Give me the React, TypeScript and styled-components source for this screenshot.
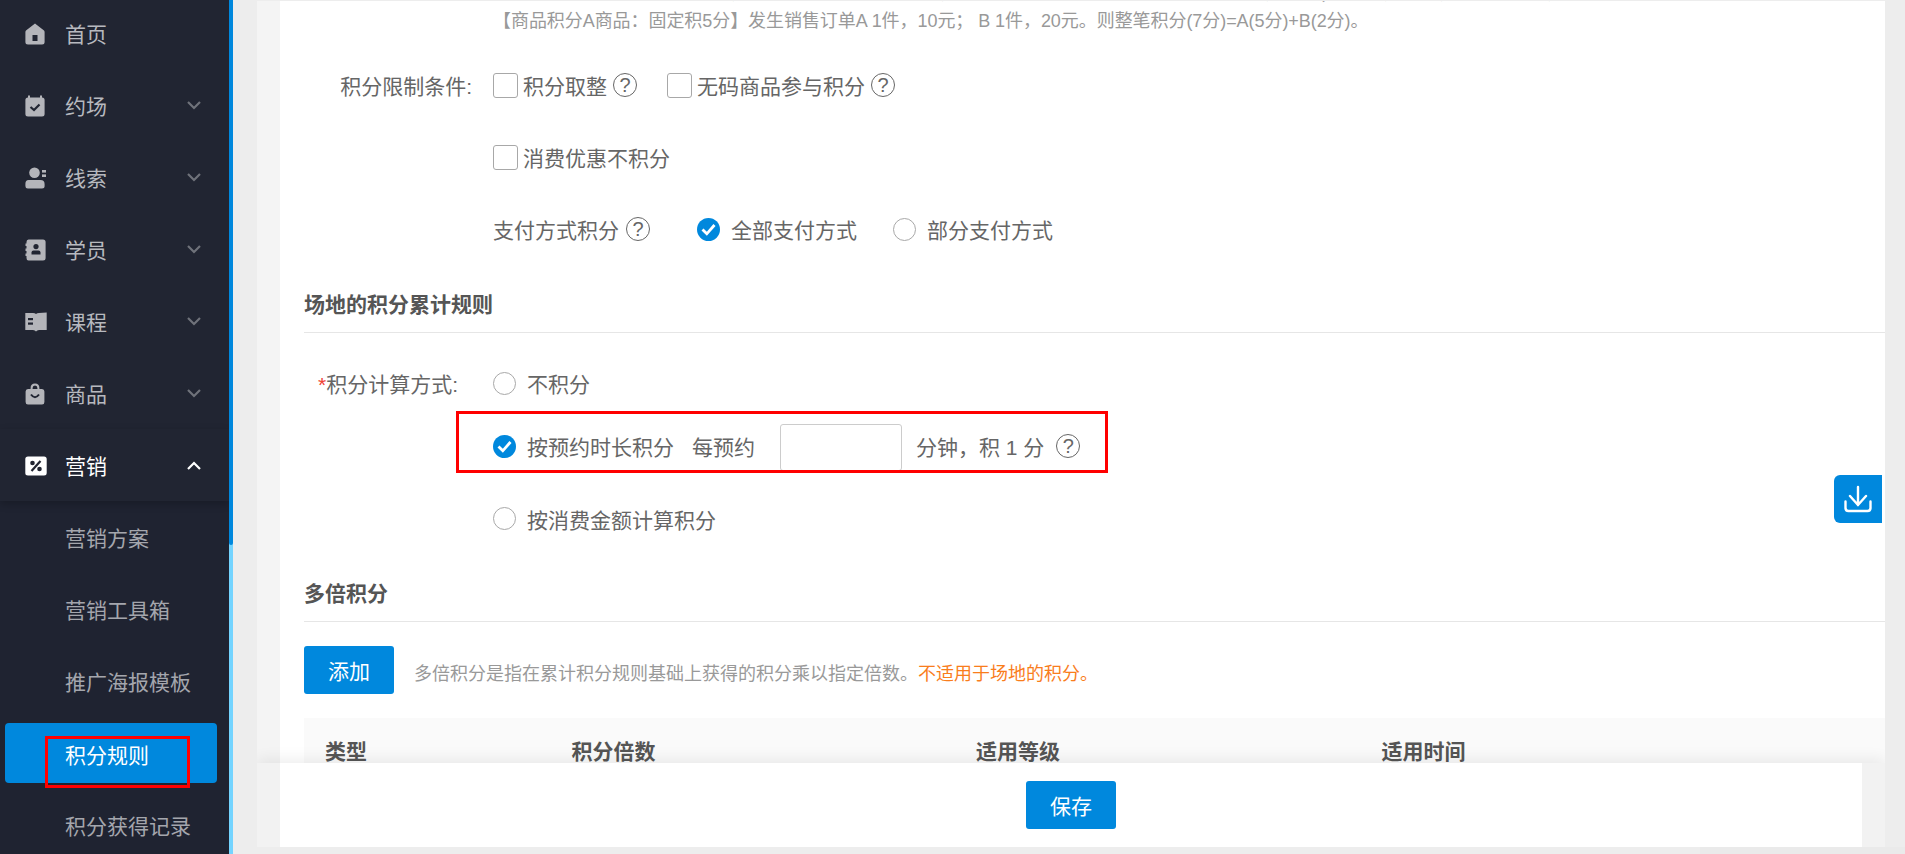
import React from 'react';
import styled, { createGlobalStyle } from 'styled-components';

const BLUE = '#0088dd';
const FONT = `"Liberation Sans", "Noto Sans CJK SC", sans-serif`;

const GlobalStyle = createGlobalStyle`
  html, body {
    margin: 0;
    padding: 0;
    height: 100%;
    overflow: hidden;
    background: #ededed;
    font-family: ${FONT};
  }
  * { box-sizing: border-box; }
`;

const Shell = styled.div`
  position: relative;
  display: flex;
  height: 854px;
  overflow: hidden;
`;

/* sidebar */
const Sidebar = styled.nav`
  width: 229px;
  flex: none;
  background: #212532;
  overflow: hidden;
`;

const MenuList = styled.div`
  margin-top: -3px;
`;

const MenuItem = styled.div<{ $open?: boolean }>`
  position: relative;
  z-index: 1;
  display: flex;
  align-items: center;
  height: 72px;
  padding: 0 28px 0 25px;
  font-size: 21px;
  color: ${p => (p.$open ? '#ffffff' : '#b7b9bf')};
  box-shadow: ${p => (p.$open ? '0 3px 8px rgba(0, 0, 0, 0.22)' : 'none')};
`;

const MenuIcon = styled.span`
  display: flex;
  width: 40px;
  flex: none;
  padding-top: 2px;
`;

const MenuText = styled.span`
  flex: 1;
`;

const SubMenu = styled.div`
  background: #1f2331;
`;

const SubItem = styled.div`
  position: relative;
  height: 72px;
  padding: 6px 12px 6px 5px;
`;

const SubLabel = styled.div<{ $active?: boolean }>`
  display: flex;
  align-items: center;
  height: 60px;
  padding: ${p => (p.$active ? '2px' : '0')} 0 0 60px;
  border-radius: 4px;
  font-size: 21px;
  color: ${p => (p.$active ? '#ffffff' : '#a4a6ad')};
  background: ${p => (p.$active ? BLUE : 'transparent')};
`;

const SideMark = styled.div`
  position: absolute;
  left: 45px;
  top: 19px;
  width: 145px;
  height: 52px;
  border: 3px solid #ff0000;
`;

const Rail = styled.div`
  width: 4px;
  flex: none;
  display: flex;
  flex-direction: column;
  background: #74d4ff;
`;

const RailThumb = styled.div`
  height: 545px;
  background: ${BLUE};
  border-radius: 0 0 2px 2px;
`;

/* main area */
const Main = styled.main`
  flex: 1;
  min-width: 0;
  padding: 1px 20px 7px 24px;
  background: #ededed;
`;

const Panel = styled.div`
  position: relative;
  height: 846px;
  overflow: hidden;
  padding-left: 23px;
  background: #f4f4f4;
`;

const Card = styled.div`
  height: 100%;
  padding-left: 24px;
  background: #ffffff;
  color: #666666;
  font-size: 21px;
`;

const Note = styled.p`
  margin: -22px 0 14px 189px;
  font-size: 18px;
  line-height: 28px;
  letter-spacing: -0.06px;
  color: #999999;
  white-space: nowrap;
`;

const Row = styled.div<{ $height?: number; $top?: number }>`
  position: relative;
  display: flex;
  align-items: center;
  height: ${p => p.$height ?? 72}px;
  margin-top: ${p => p.$top ?? 0}px;
`;

const RowLabel = styled.label<{ $inset?: number }>`
  width: 189px;
  flex: none;
  padding-right: ${p => p.$inset ?? 21}px;
  text-align: right;
  white-space: nowrap;
`;

const Star = styled.span`
  color: #f04134;
`;

const Controls = styled.div`
  display: flex;
  align-items: center;
  white-space: nowrap;
`;

const Check = styled.span`
  display: flex;
  align-items: center;
  gap: 5px;
  &::before {
    content: '';
    width: 23px;
    height: 23px;
    border: 1px solid #a8a8a8;
    border-radius: 3px;
    background: #fff;
  }
`;

const Help = styled.span<{ $before?: number; $after?: number }>`
  display: inline-flex;
  align-items: center;
  justify-content: center;
  width: 24px;
  height: 24px;
  flex: none;
  margin-left: ${p => p.$before ?? 6}px;
  margin-right: ${p => p.$after ?? 0}px;
  border: 1.5px solid #666666;
  border-radius: 50%;
  font-size: 20px;
  line-height: 1;
  color: #666666;
`;

const RadioWrap = styled.span<{ $after?: number }>`
  display: flex;
  align-items: center;
  gap: 11px;
  margin-right: ${p => p.$after ?? 0}px;
`;

const RadioDot = styled.span<{ $on?: boolean }>`
  display: flex;
  align-items: center;
  justify-content: center;
  width: 23px;
  height: 23px;
  flex: none;
  border-radius: 50%;
  border: ${p => (p.$on ? 'none' : '1px solid #a8a8a8')};
  background: ${p => (p.$on ? BLUE : '#fff')};
`;

const SectionHead = styled.h3<{ $top: number }>`
  height: 55px;
  margin: ${p => p.$top}px 0 0;
  padding-top: 11px;
  border-bottom: 1px solid #e6e6e6;
  font-size: 21px;
  line-height: 32px;
  font-weight: 700;
  color: #555555;
`;

const Plain = styled.span<{ $before?: number; $after?: number }>`
  margin-left: ${p => p.$before ?? 0}px;
  margin-right: ${p => p.$after ?? 0}px;
`;

const MinutesInput = styled.input`
  width: 122px;
  height: 47px;
  margin-top: 2px;
  padding: 0 8px;
  border: 1px solid #cccccc;
  border-radius: 3px;
  background: #fff;
  outline: none;
`;

const RedFrame = styled.div`
  position: absolute;
  left: 152px;
  top: -8px;
  width: 652px;
  height: 62px;
  border: 3px solid #ff0000;
  pointer-events: none;
`;

const Primary = styled.button`
  width: 90px;
  height: 48px;
  padding: 0;
  border: none;
  border-radius: 3px;
  background: ${BLUE};
  color: #ffffff;
  font-family: ${FONT};
  font-size: 21px;
`;

const AddRow = styled.div`
  display: flex;
  align-items: center;
  gap: 20px;
  margin-top: 24px;
`;

const Hint = styled.span`
  padding-top: 3px;
  font-size: 18px;
  color: #999999;
  white-space: nowrap;
`;

const Warn = styled.span`
  color: #f97d1c;
`;

const TableHead = styled.div`
  display: grid;
  grid-template-columns: 246.5px 404.5px 405.5px 1fr;
  margin-top: 24px;
  height: 90px;
  padding: 20px 0 0 21px;
  background: #fafafa;
  font-size: 21px;
  line-height: 28px;
  font-weight: 700;
  color: #555555;
`;

const Dock = styled.div`
  position: absolute;
  left: 0;
  right: 0;
  bottom: 0;
  height: 84px;
  padding: 0 23px;
  background: #f2f2f2;
  box-shadow: 0 -4px 14px rgba(0, 0, 0, 0.07);
`;

const DockBar = styled.div`
  display: flex;
  align-items: center;
  justify-content: center;
  height: 100%;
  background: #ffffff;
`;

const FloatButton = styled.div`
  position: absolute;
  left: 1834px;
  top: 475px;
  display: flex;
  align-items: center;
  justify-content: center;
  width: 48px;
  height: 48px;
  border-radius: 6px 0 0 6px;
  background: ${BLUE};
`;

const CornerScrap = styled.div`
  position: absolute;
  left: 1700px;
  top: 847px;
  width: 205px;
  height: 7px;
  background: #eaeaea;
`;

/* icons */
const ICON = '#b4b5ba';

const HomeIcon = () => (
  <svg width="20" height="22" viewBox="0 0 20 22">
    <path
      fill={ICON}
      fillRule="evenodd"
      d="M10 0.5 L19 7.5 Q19.6 8 19.6 9 V19 Q19.6 21.5 17 21.5 H3 Q0.4 21.5 0.4 19 V9 Q0.4 8 1 7.5 Z M7.5 12 V18 H12.5 V12 Z"
    />
  </svg>
);

const CalendarIcon = () => (
  <svg width="20" height="22" viewBox="0 0 20 22">
    <path
      fill={ICON}
      fillRule="evenodd"
      d="M3 0.5 H5 V2.5 H15 V0.5 H17 V2.5 Q19.6 2.5 19.6 5 V19 Q19.6 21.5 17 21.5 H3 Q0.4 21.5 0.4 19 V5 Q0.4 2.5 3 2.5 Z"
    />
    <path d="M5.5 12 L9 15 L14.5 9.5" fill="none" stroke="#212532" strokeWidth="2.2" />
  </svg>
);

const LeadIcon = () => (
  <svg width="21" height="22" viewBox="0 0 21 22">
    <circle cx="9.5" cy="5.8" r="5.3" fill={ICON} />
    <path fill={ICON} d="M3.5 13 H15.5 Q19.6 13 19.6 17 V19 Q19.6 21.5 17 21.5 H2.8 Q0.4 21.5 0.4 19 V17 Q0.4 13 3.5 13 Z" />
    <rect x="17" y="3" width="4" height="2.6" fill={ICON} />
    <rect x="17" y="7.4" width="4" height="2.6" fill={ICON} />
  </svg>
);

const StudentIcon = () => (
  <svg width="21" height="22" viewBox="0 0 21 22">
    <path
      fill={ICON}
      fillRule="evenodd"
      d="M3.5 0.5 H18 Q20.6 0.5 20.6 3 V19 Q20.6 21.5 18 21.5 H3.5 Q1.5 21.5 1.5 19 V17 H0.5 V14.5 H1.5 V12 H0.5 V9.5 H1.5 V7 H0.5 V4.5 H1.5 V3 Q1.5 0.5 3.5 0.5 Z"
    />
    <circle cx="11" cy="7.6" r="2.6" fill="#212532" />
    <path fill="#212532" d="M6.5 15.5 V13.6 Q6.5 11.5 8.5 11.5 H13.5 Q15.5 11.5 15.5 13.6 V15.5 Z" />
  </svg>
);

const BookIcon = () => (
  <svg width="22" height="20" viewBox="0 0 22 20">
    <path fill={ICON} d="M0.3 1 L8 1 Q10 1 11 2 Q12 1 14 1 L21.7 0.5 V18 L14 18 Q12 18 11 19.5 Q10 18 8 18 L0.3 18 Z" />
    <rect x="3" y="6" width="5" height="2.2" fill="#212532" />
    <rect x="3" y="10.5" width="5" height="2.2" fill="#212532" />
  </svg>
);

const BagIcon = () => (
  <svg width="20" height="22" viewBox="0 0 20 22">
    <path
      fill={ICON}
      fillRule="evenodd"
      d="M5.6 6 V5 Q5.6 0.5 10 0.5 Q14.4 0.5 14.4 5 V6 H17 Q19.4 6 19.4 8.5 V19 Q19.4 21.5 17 21.5 H3 Q0.6 21.5 0.6 19 V8.5 Q0.6 6 3 6 Z M7.6 6 H12.4 V5 Q12.4 2.5 10 2.5 Q7.6 2.5 7.6 5 Z"
    />
    <path d="M6 11.5 Q10 17 14 11.5" fill="none" stroke="#212532" strokeWidth="2" />
  </svg>
);

const PercentIcon = () => (
  <svg width="22" height="20" viewBox="0 0 22 20">
    <path fill="#ffffff" d="M3 0.5 H19 Q21.7 0.5 21.7 3 V17 Q21.7 19.5 19 19.5 H3 Q0.3 19.5 0.3 17 V3 Q0.3 0.5 3 0.5 Z" />
    <circle cx="7.5" cy="7" r="2.3" fill="#212532" />
    <circle cx="14.5" cy="13" r="2.3" fill="#212532" />
    <path d="M15.5 5 L6.5 15" stroke="#212532" strokeWidth="2.2" />
  </svg>
);

const Chevron = ({ up }: { up?: boolean }) => (
  <svg width="14" height="9" viewBox="0 0 14 9">
    <path
      d={up ? 'M1 8 L7 2 L13 8' : 'M1 1 L7 7 L13 1'}
      fill="none"
      stroke={up ? '#ffffff' : '#6f727a'}
      strokeWidth="2.2"
    />
  </svg>
);

const TickIcon = () => (
  <svg width="15" height="13" viewBox="0 0 15 13">
    <path d="M1.5 6.5 L5.8 10.8 L13.5 2" fill="none" stroke="#ffffff" strokeWidth="2.8" />
  </svg>
);

const DownloadIcon = () => (
  <svg width="28" height="28" viewBox="0 0 28 28">
    <path
      d="M14 2 V20 M6 11 L14 20 L22 11 M1.5 16.5 V23 Q1.5 26 4.5 26 H23.5 Q26.5 26 26.5 23 V16.5"
      fill="none"
      stroke="#ffffff"
      strokeWidth="2.4"
      strokeLinecap="round"
    />
  </svg>
);

const ScrapMarks = () => (
  <svg width="205" height="7" viewBox="0 0 205 7">
    <path d="M63 5 L70 7 M127 5 V7 M133 5 V7 M157 7 Q161 4 165 7 M190 5 L193 7 M197 5 L195 7" stroke="#222" strokeWidth="1.4" fill="none" />
  </svg>
);

const topMenus = [
  { label: '首页', icon: <HomeIcon /> },
  { label: '约场', icon: <CalendarIcon />, arrow: true },
  { label: '线索', icon: <LeadIcon />, arrow: true },
  { label: '学员', icon: <StudentIcon />, arrow: true },
  { label: '课程', icon: <BookIcon />, arrow: true },
  { label: '商品', icon: <BagIcon />, arrow: true },
];

const subMenus = ['营销方案', '营销工具箱', '推广海报模板', '积分规则', '积分获得记录'];

export default function App() {
  return (
    <Shell>
      <GlobalStyle />
      <Sidebar>
        <MenuList>
          {topMenus.map(m => (
            <MenuItem key={m.label}>
              <MenuIcon>{m.icon}</MenuIcon>
              <MenuText>{m.label}</MenuText>
              {m.arrow && <Chevron />}
            </MenuItem>
          ))}
          <MenuItem $open>
            <MenuIcon><PercentIcon /></MenuIcon>
            <MenuText>营销</MenuText>
            <Chevron up />
          </MenuItem>
          <SubMenu>
            {subMenus.map(s => (
              <SubItem key={s}>
                <SubLabel $active={s === '积分规则'}>{s}</SubLabel>
                {s === '积分规则' && <SideMark />}
              </SubItem>
            ))}
          </SubMenu>
        </MenuList>
      </Sidebar>
      <Rail>
        <RailThumb />
      </Rail>
      <Main>
        <Panel>
          <Card>
            <Note>
              【商品积分A商品：固定积5分，B商品：按消费金额积分，每消费10元积1分】发生销售订单A 1件，10元；B 1件，20元，则积分如下，
              <br />
              【商品积分A商品：固定积5分】发生销售订单A 1件，10元； B 1件，20元。则整笔积分(7分)=A(5分)+B(2分)。
            </Note>

            <Row>
              <RowLabel>积分限制条件:</RowLabel>
              <Controls>
                <Check>积分取整</Check>
                <Help $after={30}>?</Help>
                <Check>无码商品参与积分</Check>
                <Help>?</Help>
              </Controls>
            </Row>
            <Row>
              <RowLabel />
              <Controls>
                <Check>消费优惠不积分</Check>
              </Controls>
            </Row>
            <Row>
              <RowLabel />
              <Controls>
                <span>支付方式积分</span>
                <Help $before={7} $after={47}>?</Help>
                <RadioWrap $after={36}>
                  <RadioDot $on><TickIcon /></RadioDot>
                  全部支付方式
                </RadioWrap>
                <RadioWrap>
                  <RadioDot />
                  部分支付方式
                </RadioWrap>
              </Controls>
            </Row>

            <SectionHead $top={13}>场地的积分累计规则</SectionHead>

            <Row $top={14}>
              <RowLabel $inset={35}><Star>*</Star>积分计算方式:</RowLabel>
              <Controls>
                <RadioWrap>
                  <RadioDot />
                  不积分
                </RadioWrap>
              </Controls>
            </Row>
            <Row $height={54}>
              <RowLabel />
              <Controls>
                <RadioWrap $after={18}>
                  <RadioDot $on><TickIcon /></RadioDot>
                  按预约时长积分
                </RadioWrap>
                <Plain $after={25}>每预约</Plain>
                <MinutesInput />
                <Plain $before={14}>分钟，积 1 分</Plain>
                <Help $before={12}>?</Help>
              </Controls>
              <RedFrame />
            </Row>
            <Row $height={91}>
              <RowLabel />
              <Controls>
                <RadioWrap>
                  <RadioDot />
                  按消费金额计算积分
                </RadioWrap>
              </Controls>
            </Row>

            <SectionHead $top={3}>多倍积分</SectionHead>

            <AddRow>
              <Primary>添加</Primary>
              <Hint>
                多倍积分是指在累计积分规则基础上获得的积分乘以指定倍数。<Warn>不适用于场地的积分。</Warn>
              </Hint>
            </AddRow>

            <TableHead>
              <span>类型</span>
              <span>积分倍数</span>
              <span>适用等级</span>
              <span>适用时间</span>
            </TableHead>
          </Card>
          <Dock>
            <DockBar>
              <Primary>保存</Primary>
            </DockBar>
          </Dock>
        </Panel>
      </Main>
      <FloatButton><DownloadIcon /></FloatButton>
      <CornerScrap><ScrapMarks /></CornerScrap>
    </Shell>
  );
}
